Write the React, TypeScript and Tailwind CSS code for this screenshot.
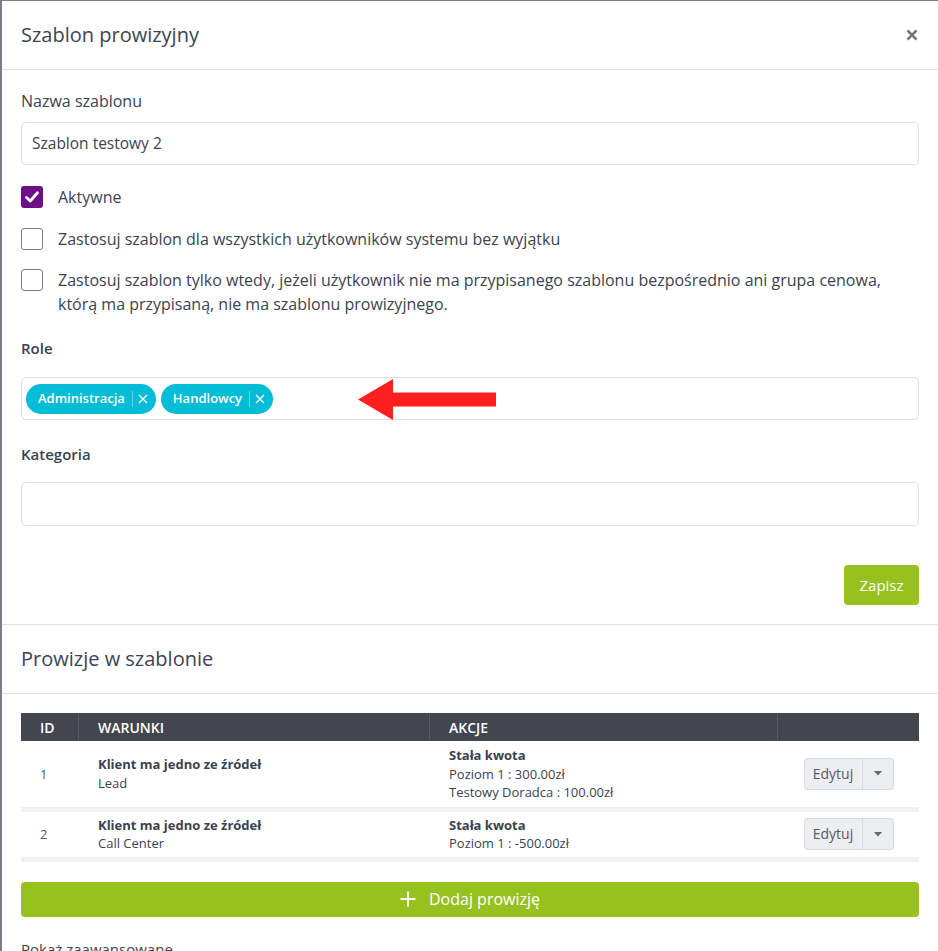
import React from "react";

function Checkbox({ checked }: { checked?: boolean }) {
  if (checked) {
    return (
      <span className="flex h-[22px] w-[22px] shrink-0 items-center justify-center rounded-[3px] bg-[#6d0f87]">
        <svg width="16" height="16" viewBox="0 0 16 16" fill="none">
          <path d="M2.5 8.5 L6.2 12 L13.5 3.8" stroke="white" strokeWidth="2.8" strokeLinecap="round" strokeLinejoin="round" />
        </svg>
      </span>
    );
  }
  return <span className="block h-[22px] w-[22px] shrink-0 rounded-[3px] border-[1.5px] border-[#7b7b7b] bg-white" />;
}

function Chip({ label }: { label: string }) {
  return (
    <span className="flex h-[30px] items-center rounded-full bg-[#03bcd5] pl-[12px] pr-[7px] text-[13px] font-semibold text-white">
      <span>{label}</span>
      <span className="ml-[7px] h-[16px] w-px bg-[#5fd6e6]" />
      <svg className="ml-[4px]" width="12" height="12" viewBox="0 0 12 12">
        <path d="M2 2 L10 10 M10 2 L2 10" stroke="white" strokeWidth="1.3" />
      </svg>
    </span>
  );
}

function EditBtn() {
  return (
    <div className="flex h-[32px] w-[90px] overflow-hidden rounded-[4px] border border-[#d6d9dd] bg-[#eceef1] text-[14px] text-[#555b66]">
      <span className="flex w-[58px] items-center justify-center border-r border-[#d6d9dd]">Edytuj</span>
      <span className="flex flex-1 items-center justify-center">
        <svg width="8" height="5" viewBox="0 0 8 5">
          <path d="M0 0 L8 0 L4 4.5 Z" fill="#666" />
        </svg>
      </span>
    </div>
  );
}

export default function App() {
  const font = { fontFamily: '"Open Sans", "Noto Sans", sans-serif' };
  return (
    <div className="h-[951px] w-[938px] overflow-hidden bg-[#7e7c87]" style={font}>
      <div className="ml-[2px] mt-[1px] h-[950px] bg-white text-[#3b4251]">
        {/* Header */}
        <div className="flex h-[69px] items-center justify-between border-b border-[#e3e5e8] pl-[19px] pr-[20px]">
          <span className="text-[20px] text-[#3c4454]">Szablon prowizyjny</span>
          <svg width="12" height="12" viewBox="0 0 12 12">
            <path d="M1.5 1.5 L10.5 10.5 M10.5 1.5 L1.5 10.5" stroke="#7a7a7a" strokeWidth="2.6" />
          </svg>
        </div>
        {/* Form */}
        <div className="flex flex-col pl-[19px] pr-[19px] pt-[19px]">
          <label className="text-[16px] leading-[24px]">Nazwa szablonu</label>
          <div className="mt-[9px] flex h-[43px] items-center rounded-[5px] border border-[#dcdfe3] px-[10px] text-[15.5px]">
            Szablon testowy 2
          </div>
          <div className="mt-[20px] flex items-center gap-[15px] text-[16px] leading-[24px]">
            <Checkbox checked />
            <span>Aktywne</span>
          </div>
          <div className="mt-[18px] flex items-center gap-[15px] text-[16px] leading-[24px]">
            <Checkbox />
            <span>Zastosuj szablon dla wszystkich użytkowników systemu bez wyjątku</span>
          </div>
          <div className="mt-[18px] flex items-start gap-[15px] text-[16px] leading-[24px]">
            <Checkbox />
            <span className="-mt-[1px]">
              Zastosuj szablon tylko wtedy, jeżeli użytkownik nie ma przypisanego szablonu bezpośrednio ani grupa cenowa,
              <br />
              którą ma przypisaną, nie ma szablonu prowizyjnego.
            </span>
          </div>
          <label className="mt-[20px] text-[15px] font-semibold leading-[24px]">Role</label>
          <div className="relative mt-[17px] flex h-[43px] items-center gap-[5px] rounded-[5px] border border-[#dcdfe3] px-[4px]">
            <Chip label="Administracja" />
            <Chip label="Handlowcy" />
            <svg className="absolute left-[336px] top-[1px]" width="138" height="41" viewBox="0 0 138 41">
              <polygon points="0,20.5 35,0 35,13.5 138,13.5 138,27.5 35,27.5 35,41" fill="#ff1f1f" />
            </svg>
          </div>
          <label className="mt-[22px] text-[15px] font-semibold leading-[24px]">Kategoria</label>
          <div className="mt-[16px] h-[44px] rounded-[5px] border border-[#dcdfe3]" />
          <div className="mt-[39px] flex justify-end">
            <button className="h-[40px] w-[75px] rounded-[4px] bg-[#97c11f] text-[15px] text-white">Zapisz</button>
          </div>
        </div>
        {/* Section 2 */}
        <div className="mt-[19px] border-t border-[#dfe1e4]">
          <div className="flex h-[69px] items-center border-b border-[#e3e5e8] pl-[19px]">
            <span className="text-[20px] text-[#3c4454]">Prowizje w szablonie</span>
          </div>
          <div className="pl-[19px] pr-[19px] pt-[19px]">
            <div className="grid h-[28px] grid-cols-[58px_351px_348px_141px] bg-[#43464f] text-[14px] font-semibold text-white">
              <div className="flex items-center border-r border-[#5a5d66] pl-[19px]">ID</div>
              <div className="flex items-center border-r border-[#5a5d66] pl-[19px]">WARUNKI</div>
              <div className="flex items-center border-r border-[#5a5d66] pl-[19px]">AKCJE</div>
              <div />
            </div>
            <div className="grid grid-cols-[58px_351px_348px_141px] border-b-[5px] border-[#f0f1f2] text-[13px] leading-[18.5px]">
              <div className="flex items-center pl-[19px] text-[#555b66]">1</div>
              <div className="flex flex-col justify-center pl-[19px]">
                <span className="font-bold">Klient ma jedno ze źródeł</span>
                <span>Lead</span>
              </div>
              <div className="flex flex-col py-[5px] pl-[19px]">
                <span className="font-bold">Stała kwota</span>
                <span>Poziom 1 : 300.00zł</span>
                <span>Testowy Doradca : 100.00zł</span>
              </div>
              <div className="flex items-center justify-center">
                <EditBtn />
              </div>
            </div>
            <div className="grid grid-cols-[58px_351px_348px_141px] border-b-[5px] border-[#f0f1f2] text-[13px] leading-[18.5px]">
              <div className="flex items-center pl-[19px] text-[#555b66]">2</div>
              <div className="flex flex-col justify-center pl-[19px]">
                <span className="font-bold">Klient ma jedno ze źródeł</span>
                <span>Call Center</span>
              </div>
              <div className="flex flex-col py-[4px] pl-[19px]">
                <span className="font-bold">Stała kwota</span>
                <span>Poziom 1 : -500.00zł</span>
              </div>
              <div className="flex items-center justify-center">
                <EditBtn />
              </div>
            </div>
            <button className="mt-[20px] flex h-[35px] w-full items-center justify-center gap-[13px] rounded-[4px] bg-[#97c11f] text-[16px] text-white">
              <svg width="16" height="16" viewBox="0 0 16 16">
                <path d="M8 0.5 V15.5 M0.5 8 H15.5" stroke="white" strokeWidth="2" />
              </svg>
              <span>Dodaj prowizję</span>
            </button>
            <div className="mt-[20px] text-[15px] leading-[24px]">Pokaż zaawansowane</div>
          </div>
        </div>
      </div>
    </div>
  );
}
